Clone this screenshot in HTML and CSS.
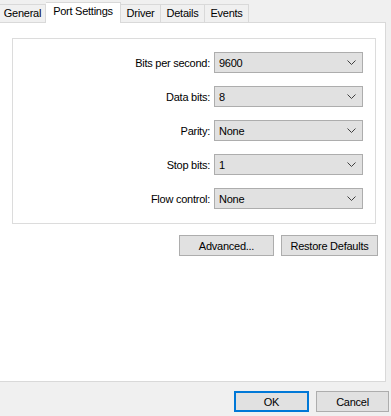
FILE: index.html
```html
<!DOCTYPE html>
<html lang="en">
<head>
  <meta charset="UTF-8">
  <title>Port Settings</title>
  <link rel="stylesheet" href="styles.css">
</head>
<body>
<div class="tabs">
  <div class="tab tab-general">General</div>
  <div class="tab tab-port active">Port Settings</div>
  <div class="tab tab-driver">Driver</div>
  <div class="tab tab-details">Details</div>
  <div class="tab tab-events">Events</div>
</div>
<div class="panel">
  <div class="group">
    <div class="row">
      <span class="label">Bits per second:</span>
      <div class="combo"><span>9600</span><svg class="arrow" width="9" height="5" viewBox="0 0 9 5"><path d="M0.5 0.5 L4.5 4.5 L8.5 0.5" fill="none" stroke="#404040" stroke-width="1"/></svg></div>
    </div>
    <div class="row">
      <span class="label">Data bits:</span>
      <div class="combo"><span>8</span><svg class="arrow" width="9" height="5" viewBox="0 0 9 5"><path d="M0.5 0.5 L4.5 4.5 L8.5 0.5" fill="none" stroke="#404040" stroke-width="1"/></svg></div>
    </div>
    <div class="row">
      <span class="label">Parity:</span>
      <div class="combo"><span>None</span><svg class="arrow" width="9" height="5" viewBox="0 0 9 5"><path d="M0.5 0.5 L4.5 4.5 L8.5 0.5" fill="none" stroke="#404040" stroke-width="1"/></svg></div>
    </div>
    <div class="row">
      <span class="label">Stop bits:</span>
      <div class="combo"><span>1</span><svg class="arrow" width="9" height="5" viewBox="0 0 9 5"><path d="M0.5 0.5 L4.5 4.5 L8.5 0.5" fill="none" stroke="#404040" stroke-width="1"/></svg></div>
    </div>
    <div class="row">
      <span class="label">Flow control:</span>
      <div class="combo"><span>None</span><svg class="arrow" width="9" height="5" viewBox="0 0 9 5"><path d="M0.5 0.5 L4.5 4.5 L8.5 0.5" fill="none" stroke="#404040" stroke-width="1"/></svg></div>
    </div>
  </div>
  <div class="actions">
    <button class="btn btn-adv">Advanced...</button>
    <button class="btn btn-restore">Restore Defaults</button>
  </div>
</div>
<div class="footer">
  <button class="btn btn-ok">OK</button>
  <button class="btn btn-cancel">Cancel</button>
</div>
</body>
</html>
```

FILE: styles.css
```css
body {
  margin: 0;
  padding: 0;
  background-color: #f0f0f0;
  font-family: "Liberation Sans", Arial, sans-serif;
  font-size: 11px;
  letter-spacing: -0.25px;
  color: #000;
  width: 391px;
  height: 416px;
  overflow: hidden;
}
.tabs {
  display: flex;
  align-items: flex-end;
  height: 22px;
  margin-left: -1px;
}
.tab {
  flex: none;
  box-sizing: border-box;
  height: 18px;
  line-height: 17px;
  text-align: center;
  border: 1px solid #d9d9d9;
  border-bottom: none;
  border-left: none;
  background-color: #f0f0f0;
}
.tab-general {
  width: 47px;
  border-left: 1px solid #d9d9d9;
}
.tab-port {
  width: 75px;
}
.tab-driver {
  width: 40px;
}
.tab-details {
  width: 44px;
}
.tab-events {
  width: 44px;
}
.tab.active {
  height: 21px;
  line-height: 17px;
  background-color: #fff;
  margin-bottom: -1px;
  position: relative;
}
.panel {
  background-color: #fff;
  border: 1px solid #d9d9d9;
  margin-left: -1px;
  width: 385px;
  height: 358px;
}
.group {
  margin: 15px 0 0 12px;
  width: 362px;
  border: 1px solid #dcdcdc;
  padding: 13px 0 14px 0;
  display: flex;
  flex-direction: column;
  gap: 13px;
}
.row {
  display: grid;
  grid-template-columns: 1fr 149px;
  column-gap: 4px;
  align-items: center;
  padding-right: 12px;
}
.label {
  text-align: right;
}
.combo {
  height: 19px;
  border: 1px solid #adadad;
  background-color: #e1e1e1;
  display: flex;
  align-items: center;
  justify-content: space-between;
  padding: 0 6px 0 4px;
}
.arrow {
  display: block;
}
.actions {
  display: flex;
  justify-content: flex-end;
  gap: 7px;
  margin: 11px 7px 0 0;
}
.btn {
  font-family: "Liberation Sans", Arial, sans-serif;
  font-size: 11px;
  letter-spacing: -0.25px;
  color: #000;
  background-color: #e1e1e1;
  border: 1px solid #adadad;
  height: 21px;
  padding: 0;
  margin: 0;
}
.btn-adv {
  width: 95px;
}
.btn-restore {
  width: 97px;
}
.footer {
  display: flex;
  justify-content: flex-end;
  gap: 7px;
  padding: 9px 2px 0 0;
}
.btn-ok {
  width: 75px;
  border: 2px solid #0078d7;
}
.btn-cancel {
  width: 73px;
}
```
